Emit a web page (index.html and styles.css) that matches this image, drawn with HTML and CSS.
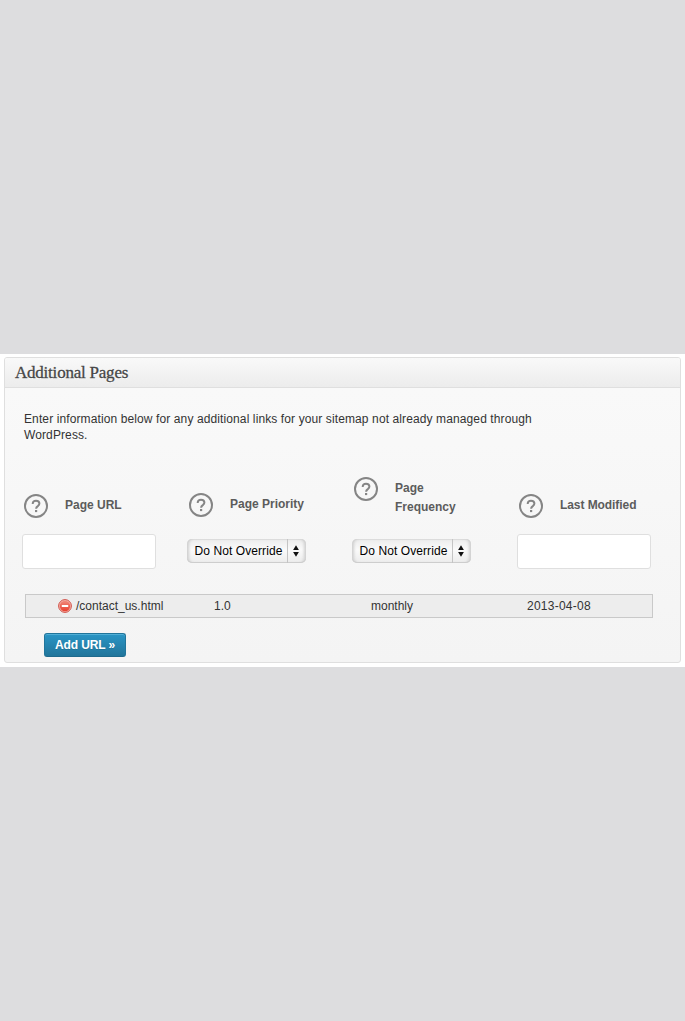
FILE: index.html
```html
<!DOCTYPE html>
<html lang="en">
<head>
<meta charset="utf-8">
<title>Additional Pages</title>
<link rel="stylesheet" href="styles.css">
</head>
<body>
<svg class="defs" width="0" height="0">
  <symbol id="help" viewBox="0 0 24 24">
    <circle cx="12" cy="12" r="11" fill="none" stroke="#858585" stroke-width="2"/>
    <path d="M8.7 9.9C8.7 7.9 10 6.8 12 6.8s3.4 1 3.4 2.8c0 1.2-.6 1.8-1.6 2.5-1.2.8-1.7 1.2-1.7 2.7" fill="none" stroke="#858585" stroke-width="2"/>
    <rect x="11" y="16" width="2.2" height="2.1" fill="#858585"/>
  </symbol>
  <symbol id="arrows" viewBox="0 0 6 12">
    <path d="M3 .3 5.9 5H.1zM3 11.7 5.9 7H.1z" fill="#111"/>
  </symbol>
</svg>
<main class="sheet">
  <section class="panel">
    <h3 class="panel-title"><span>Additional Pages</span></h3>
    <div class="panel-body">
      <p class="intro">Enter information below for any additional links for your sitemap not already managed through<br>WordPress.</p>
      <form class="fields">
        <div class="field">
          <div class="label low"><svg class="help"><use href="#help"/></svg><label class="url">Page URL</label></div>
          <input class="text" type="text" aria-label="Page URL">
        </div>
        <div class="field">
          <div class="label mid"><svg class="help"><use href="#help"/></svg><label class="priority">Page Priority</label></div>
          <button class="select" type="button"><span class="value">Do Not Override</span><span class="stepper"><svg class="arrows"><use href="#arrows"/></svg></span></button>
        </div>
        <div class="field">
          <div class="label"><svg class="help"><use href="#help"/></svg><label class="frequency">Page<br>Frequency</label></div>
          <button class="select" type="button"><span class="value">Do Not Override</span><span class="stepper"><svg class="arrows"><use href="#arrows"/></svg></span></button>
        </div>
        <div class="field">
          <div class="label low"><svg class="help"><use href="#help"/></svg><label class="modified">Last Modified</label></div>
          <input class="text" type="text" aria-label="Last Modified">
        </div>
      </form>
      <div class="entry">
        <span class="path"><svg class="remove" viewBox="0 0 14 14">
          <defs><linearGradient id="red" x1="0" y1="0" x2="0" y2="1"><stop offset="0" stop-color="#f08a7c"/><stop offset="1" stop-color="#e8402f"/></linearGradient></defs>
          <circle cx="7" cy="7" r="6.4" fill="#f6b5ab" stroke="#cf5148" stroke-width="1"/>
          <circle cx="7" cy="7" r="5.2" fill="url(#red)"/>
          <rect x="3.8" y="6" width="6.4" height="2" fill="#fff"/>
        </svg>/contact_us.html</span>
        <span>1.0</span>
        <span>monthly</span>
        <span class="date">2013-04-08</span>
      </div>
      <button class="add" type="button">Add URL »</button>
    </div>
  </section>
</main>
</body>
</html>
```
FILE: styles.css
```css
* { box-sizing: border-box; }
body {
  margin: 0;
  min-height: 1021px;
  padding-top: 354px;
  background: #dddddf;
  color: #333;
  font: 12px/16px "Liberation Sans", Arial, sans-serif;
}
button { font-family: inherit; }
.defs { display: block; position: absolute; }
.sheet { height: 313px; padding: 3px 4px 4px; background: #fff; }
.panel {
  height: 306px;
  border: 1px solid #dfdfdf;
  border-radius: 3px;
  background: linear-gradient(#f9f9f9 30px, #f4f4f4);
  overflow: hidden;
}
.panel-title {
  display: flex;
  align-items: center;
  height: 30px;
  margin: 0;
  padding: 0 10px;
  border-bottom: 1px solid #dfdfdf;
  background: linear-gradient(#f9f9f9, #ececec);
  color: #464646;
  font: 17px/20px "Liberation Serif", Georgia, serif;
  text-shadow: 0 1px 0 #fff;
  -webkit-text-stroke: 0.3px #464646;
  letter-spacing: -0.22px;
}
.panel-body { padding: 23px 17px 0; }
.intro { margin: 0 2px 34px; letter-spacing: 0.11px; white-space: nowrap; }
.fields { display: grid; grid-template-columns: repeat(4, 165px); margin: 0; }
.label { display: flex; height: 57px; padding-left: 2px; }
.label.low { padding-top: 17px; }
.label.mid { padding-top: 16px; }
.help { flex: none; width: 24px; height: 24px; }
label { margin: 2px 0 0 17px; color: #5c5c5c; font-weight: bold; line-height: 19px; white-space: nowrap; }
.modified { letter-spacing: -0.07px; }
.text {
  display: block;
  width: 134px;
  height: 35px;
  padding: 0 8px;
  border: 1px solid #dfdfdf;
  border-radius: 3px;
  background: #fff;
}
.select {
  display: flex;
  align-items: center;
  width: 119px;
  height: 24px;
  margin-top: 5px;
  margin-left: -0.5px;
  padding: 0 0 0 8px;
  border: 0;
  border-radius: 5px;
  background: linear-gradient(#ececec, #fafafa 45%, #ececec);
  box-shadow: inset 3px 0 3px -1px #cfcfcf, inset -3px 0 3px -1px #cfcfcf, inset 0 1px 0 #e0e0e0, inset 0 -1px 0 #cdcdcd;
  color: #000;
  font-size: 12px;
}
.value { width: 92px; text-align: left; letter-spacing: 0.08px; white-space: nowrap; }
.stepper { display: flex; align-items: center; height: 24px; padding-left: 5px; border-left: 1px solid #c4c4c4; }
.arrows { width: 6px; height: 12px; }
.entry {
  display: grid;
  grid-template-columns: 156px 157px 156px 1fr;
  align-items: center;
  width: 628px;
  height: 24px;
  margin: 25px 0 15px 3px;
  padding-left: 32px;
  border: 1px solid #c9c9c9;
  background: #ededed;
}
.path { display: flex; align-items: center; gap: 4px; }
.date { letter-spacing: 0.25px; }
.remove { width: 14px; height: 14px; }
.add {
  display: block;
  width: 82px;
  height: 24px;
  margin-left: 22px;
  padding: 0;
  border: 1px solid #21759b;
  border-bottom-color: #1e6a8d;
  border-radius: 3px;
  background: linear-gradient(#2a95c5, #21759b);
  box-shadow: inset 0 1px 0 rgba(120, 200, 230, 0.5);
  color: #fff;
  font-size: 12px;
  font-weight: bold;
  letter-spacing: -0.1px;
  text-shadow: 0 1px 0 rgba(0, 0, 0, 0.1);
}
```
